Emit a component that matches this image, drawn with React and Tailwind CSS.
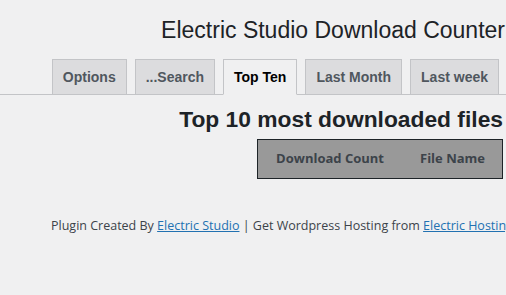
import React from "react";

const tabs = ["Options", "...Search", "Top Ten", "Last Month", "Last week"];

export default function App() {
  const active = "Top Ten";

  return (
    <div className="w-[506px] h-[295px] overflow-hidden bg-[#f0f0f1] text-[#1d2327]">
      <h1 className="pt-[15px] pr-[1px] text-right text-[23px] leading-[30px] font-normal font-['Liberation_Sans',Arial,sans-serif] whitespace-nowrap">
        Electric Studio Download Counter
      </h1>

      <nav className="mt-[14px] flex justify-end gap-[8px] pr-[7px] border-b border-[#c3c4c7] font-['Liberation_Sans',Arial,sans-serif]">
        {tabs.map((t) => (
          <span
            key={t}
            className={
              t === active
                ? "-mb-px px-[10px] h-[36px] flex items-center text-[14px] font-bold border border-[#c3c4c7] border-b-[#f0f0f1] bg-[#f0f0f1] text-black"
                : "-mb-px px-[10px] h-[36px] flex items-center text-[14px] font-bold border border-[#c3c4c7] bg-[#dcdcde] text-[#50575e]"
            }
          >
            {t}
          </span>
        ))}
      </nav>

      <h2 className="mt-[10px] pr-[3px] text-right text-[22.8px] leading-[28px] font-bold font-['Liberation_Sans',Arial,sans-serif] whitespace-nowrap">
        Top 10 most downloaded files
      </h2>

      <div className="mt-[6px] flex justify-end pr-[3px]">
        <table className="border border-[#1d2327] bg-[#999999]">
          <thead>
            <tr className="h-[39px] text-[13px] font-bold text-[#3c434a] font-['Open_Sans','Noto_Sans',sans-serif]">
              <th className="pl-[18px] pr-[18px] font-bold">Download Count</th>
              <th className="pl-[18px] pr-[17px] font-bold">File Name</th>
            </tr>
          </thead>
        </table>
      </div>

      <p className="mt-[38px] pl-[51px] whitespace-nowrap text-[12.5px] text-[#3c434a] font-['Open_Sans','Noto_Sans',sans-serif]">
        Plugin Created By{" "}
        <a href="#" className="text-[#2271b1] underline">
          Electric Studio
        </a>{" "}
        | Get Wordpress Hosting from{" "}
        <a href="#" className="text-[#2271b1] underline">
          Electric Hosting
        </a>
      </p>
    </div>
  );
}
